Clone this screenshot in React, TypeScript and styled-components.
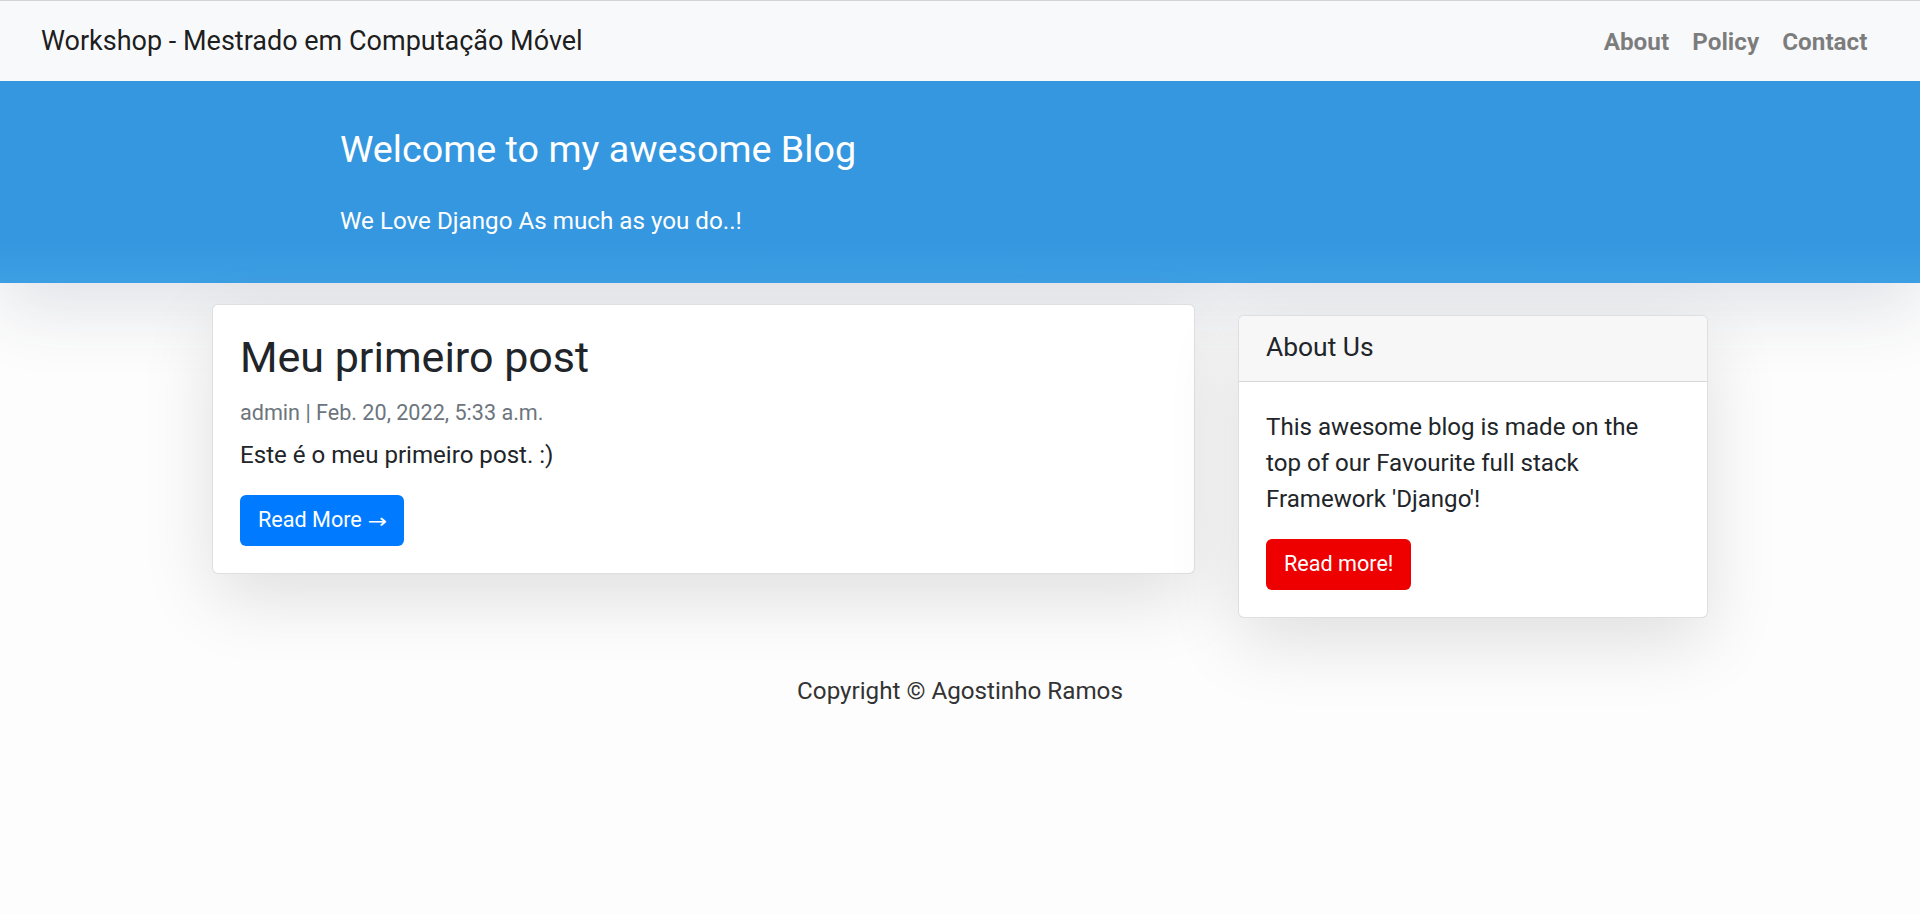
import React from "react";
import styled, { createGlobalStyle } from "styled-components";

const GlobalStyle = createGlobalStyle`
  html, body {
    margin: 0;
    padding: 0;
    background: #fdfdfd;
  }
  body {
    font-family: Roboto, "Liberation Sans", Arial, sans-serif;
    color: #212529;
    -webkit-font-smoothing: antialiased;
  }
  * { box-sizing: border-box; }
`;

const Page = styled.div`
  min-height: 914px;
  display: flex;
  flex-direction: column;
`;

const NavBar = styled.nav`
  height: 81px;
  border-top: 1px solid #d2d3d5;
  background: #f8f9fa;
  display: flex;
  align-items: center;
  justify-content: space-between;
  padding: 0 41px 0 41px;
  position: relative;
  z-index: 2;
`;

const Brand = styled.a`
  font-size: 27px;
  line-height: normal;
  color: rgba(0, 0, 0, 0.9);
  text-decoration: none;
`;

const NavLinks = styled.ul`
  display: flex;
  list-style: none;
  margin: 0;
  padding: 0;
`;

const NavLink = styled.a`
  display: block;
  padding: 0 11.5px;
  font-size: 24.3px;
  font-weight: 700;
  line-height: normal;
  color: rgba(0, 0, 0, 0.5);
  text-decoration: none;
`;

const Hero = styled.header`
  height: 202px;
  background: linear-gradient(180deg, #3597df 0%, #3597df 80%, #3d9fe3 100%);
  box-shadow: 0 24px 72px rgba(40, 60, 90, 0.14);
  position: relative;
  z-index: 1;
`;

const HeroInner = styled.div`
  width: 1240px;
  margin: 0 auto;
  padding-top: 46px;
  color: #fff;
`;

const HeroTitle = styled.h1`
  margin: 0 0 31px;
  font-size: 37.7px;
  font-weight: 400;
  line-height: 1.2;
`;

const HeroSubtitle = styled.p`
  margin: 0;
  font-size: 24.2px;
  line-height: 1.5;
`;

const Main = styled.main`
  width: 1496px;
  margin: 21px auto 0;
  display: grid;
  grid-template-columns: 983px 470px;
  column-gap: 43px;
  align-items: start;
  position: relative;
  z-index: 2;
`;

const Card = styled.article<{ $offset?: number }>`
  background: #fff;
  border: 1px solid rgba(0, 0, 0, 0.125);
  border-radius: 6px;
  box-shadow: 0 24px 72px rgba(0, 0, 0, 0.12);
  margin-top: ${(p) => p.$offset ?? 0}px;
`;

const CardBody = styled.div`
  padding: 27px;
`;

const PostTitle = styled.h2`
  margin: 0 0 13px;
  font-size: 43px;
  font-weight: 400;
  line-height: 1.2;
  color: #212529;
`;

const PostMeta = styled.p`
  margin: 0 0 8px;
  font-size: 21.6px;
  line-height: 1.5;
  color: #6c757d;
`;

const Text = styled.p<{ $width?: number }>`
  margin: 0 0 22px;
  font-size: 24.1px;
  line-height: 1.5;
  color: #212529;
  max-width: ${(p) => (p.$width ? `${p.$width}px` : "none")};
`;

const Button = styled.a<{ $color: string }>`
  display: inline-flex;
  align-items: center;
  height: 51px;
  padding: 0 18px;
  border-radius: 6px;
  background: ${(p) => p.$color};
  color: #fff;
  font-size: 21.6px;
  line-height: 1.5;
  text-decoration: none;
  white-space: pre;
`;

const Arrow = styled.span`
  font-family: "DejaVu Sans", sans-serif;
  font-size: 20px;
  transform: scaleX(1.15);
  display: inline-block;
  margin-left: 2px;
`;

const CardHeader = styled.div`
  padding: 16px 27px 17px;
  background: #f7f7f7;
  border-bottom: 1px solid rgba(0, 0, 0, 0.125);
  border-radius: 5px 5px 0 0;
`;

const CardHeaderTitle = styled.h5`
  margin: 0;
  font-size: 26.4px;
  font-weight: 400;
  line-height: 1.2;
  color: #212529;
`;

const Footer = styled.footer`
  padding-top: 55px;
  text-align: center;
  font-size: 24.2px;
  line-height: 1.5;
  color: #333;
`;

export default function App() {
  return (
    <>
      <GlobalStyle />
      <Page>
        <NavBar>
          <Brand href="#">Workshop - Mestrado em Computação Móvel</Brand>
          <NavLinks>
            <li><NavLink href="#">About</NavLink></li>
            <li><NavLink href="#">Policy</NavLink></li>
            <li><NavLink href="#">Contact</NavLink></li>
          </NavLinks>
        </NavBar>
        <Hero>
          <HeroInner>
            <HeroTitle>Welcome to my awesome Blog</HeroTitle>
            <HeroSubtitle>We Love Django As much as you do..!</HeroSubtitle>
          </HeroInner>
        </Hero>
        <Main>
          <Card>
            <CardBody>
              <PostTitle>Meu primeiro post</PostTitle>
              <PostMeta>admin | Feb. 20, 2022, 5:33 a.m.</PostMeta>
              <Text>Este é o meu primeiro post. :)</Text>
              <Button href="#" $color="#007bff">Read More <Arrow>&rarr;</Arrow></Button>
            </CardBody>
          </Card>
          <Card $offset={11}>
            <CardHeader>
              <CardHeaderTitle>About Us</CardHeaderTitle>
            </CardHeader>
            <CardBody>
              <Text $width={400}>
                This awesome blog is made on the top of our Favourite full stack Framework 'Django'!
              </Text>
              <Button href="#" $color="#ef0000">Read more!</Button>
            </CardBody>
          </Card>
        </Main>
        <Footer>Copyright © Agostinho Ramos</Footer>
      </Page>
    </>
  );
}
